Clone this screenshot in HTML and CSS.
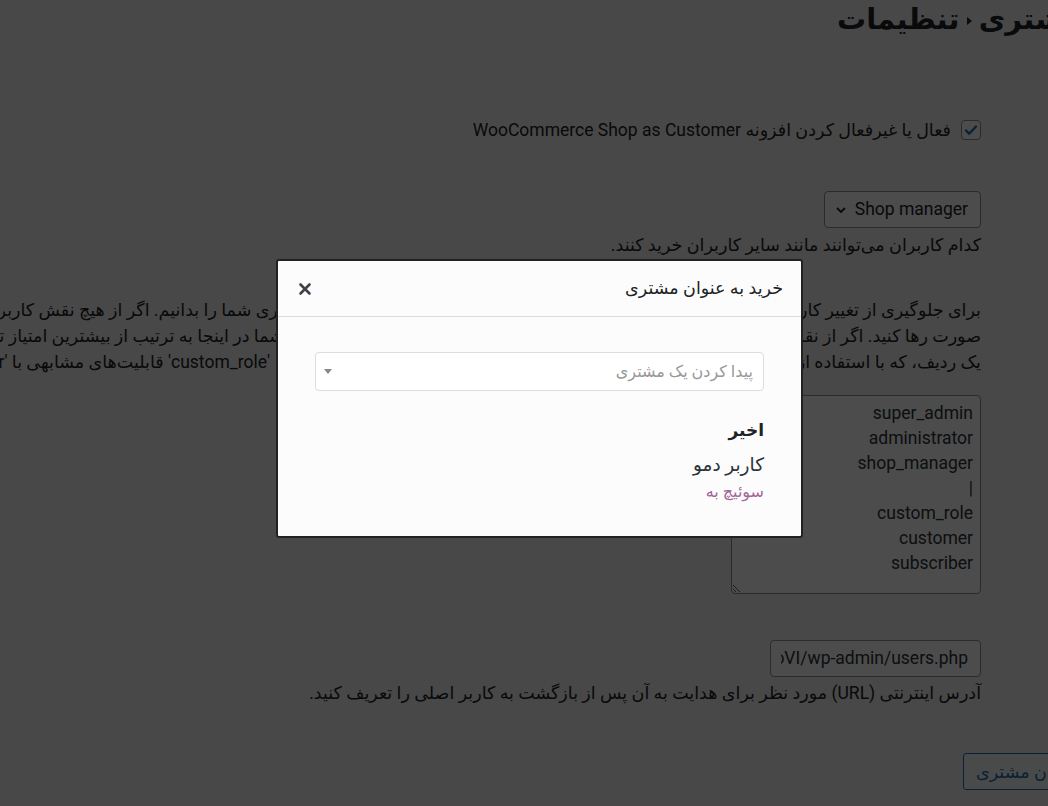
FILE: index.html
```html
<!doctype html>
<html lang="fa" dir="rtl">
  <head>
    <meta charset="UTF-8" />
    <meta name="viewport" content="width=device-width, initial-scale=1.0" />
    <title>تنظیمات خرید به عنوان مشتری</title>
    <link rel="stylesheet" href="styles.css">
  </head>
  <body>
    <div class="wrap">
      <h1 class="page-title"><span>خرید به عنوان مشتری <span class="crumb-sep"></span> تنظیمات</span></h1>

      <label class="toggle">
        <span class="checkbox">
          <svg width="16" height="16" viewBox="0 0 16 16"><path d="M3 8.5l3.2 3.2L13 4.5" fill="none" stroke="#2271b1" stroke-width="2.4" stroke-linecap="round" stroke-linejoin="round"/></svg>
        </span>
        فعال یا غیرفعال کردن افزونه WooCommerce Shop as Customer
      </label>

      <div class="field">
        <div class="select">
          <span>Shop manager</span>
          <svg width="12" height="8" viewBox="0 0 12 8"><path d="M2 2l4 4 4-4" fill="none" stroke="#1d2327" stroke-width="1.8"/></svg>
        </div>
      </div>
      <p class="desc">کدام کاربران می‌توانند مانند سایر کاربران خرید کنند.</p>

      <div class="roles-help">
        <div class="line">
          <span class="line-start">برای جلوگیری از تغییر کاربر به کاربری با قابلیت‌های بیشتر، ما نیاز داریم ترتیب نقش‌های</span>
          <span class="line-rest first">کاربری شما را بدانیم. اگر از هیچ نقش کاربری سفارشی استفاده نمی‌کنید، این فیلد را به همین</span>
        </div>
        <div class="line">
          <span class="line-start">صورت رها کنید. اگر از نقش‌های سفارشی استفاده می‌کنید، لطفاً همه نقش‌های</span>
          <span class="line-rest second">شما در اینجا به ترتیب از بیشترین امتیاز تا کمترین وارد کنید. هر نقش در</span>
        </div>
        <div class="line">
          <span class="line-start">یک ردیف، که با استفاده از یک خط عمودی جدا شده است. برای مثال نقش</span>
          <span class="line-rest third">'custom_role' قابلیت‌های مشابهی با 'shop_manager' دارد.</span>
        </div>
      </div>

      <textarea class="roles" rows="7" spellcheck="false">super_admin
administrator
shop_manager
|
custom_role
customer
subscriber</textarea>

      <div class="url-field"><span>https://demo.example.com/sandbox/kT3aoVI/wp-admin/users.php</span></div>
      <p class="desc">آدرس اینترنتی (URL) مورد نظر برای هدایت به آن پس از بازگشت به کاربر اصلی را تعریف کنید.</p>

      <div class="submit-row">
        <button class="button">خرید به عنوان مشتری</button>
      </div>
    </div>

    <div class="backdrop"></div>

    <div class="modal">
      <div class="modal-header">
        <h2>خرید به عنوان مشتری</h2>
        <button class="modal-close" aria-label="بستن">
          <svg width="14" height="14" viewBox="0 0 14 14"><path d="M2.5 2.5l9 9M11.5 2.5l-9 9" stroke="#3c434a" stroke-width="2.6" stroke-linecap="round"/></svg>
        </button>
      </div>
      <div class="modal-body">
        <div class="customer-search">
          <span class="placeholder">پیدا کردن یک مشتری</span>
          <span class="search-arrow"></span>
        </div>
        <h3 class="recent-title">اخیر</h3>
        <div class="customer-name">کاربر دمو</div>
        <a href="#" class="switch-link">سوئیچ به</a>
      </div>
    </div>
  </body>
</html>
```
FILE: styles.css
```css
html,
body {
  margin: 0;
}

body {
  width: 1048px;
  height: 806px;
  overflow: hidden;
  background-color: #f0f0f1;
  color: #1d2327;
  font-family: Roboto, "DejaVu Sans", sans-serif;
  font-size: 17.5px;
  line-height: 1.5;
}

.wrap {
  width: 981px;
  margin-right: 67px;
}

/* title is wider than the frame: pin its left end, let it run off the right */
.page-title {
  display: flex;
  justify-content: flex-end;
  margin: 0 -400px 0 0;
  padding-left: 837px;
  font-size: 29px;
  font-weight: 700;
  line-height: 38px;
  white-space: nowrap;
}

.page-title > span {
  flex: none;
}

.crumb-sep {
  display: inline-block;
  width: 0;
  height: 0;
  border-top: 4px solid transparent;
  border-bottom: 4px solid transparent;
  border-left: 5px solid #1d2327;
  vertical-align: middle;
}

.toggle {
  display: flex;
  align-items: center;
  gap: 10px;
  margin-top: 79px;
  line-height: 26px;
}

.checkbox {
  width: 18px;
  height: 18px;
  border: 1px solid #8c8f94;
  border-radius: 4px;
  background-color: #fff;
  display: grid;
  place-items: center;
}

.field {
  margin-top: 48px;
}

.select {
  display: inline-flex;
  align-items: center;
  gap: 8px;
  height: 37px;
  box-sizing: border-box;
  padding: 0 12px 0 10px;
  border: 1px solid #8c8f94;
  border-radius: 4px;
  background-color: #fff;
}

.desc {
  margin: 4px 0 0;
  line-height: 26px;
}

.roles-help {
  margin-top: 39px;
  line-height: 26px;
}

.line {
  display: flex;
  white-space: nowrap;
}

.line-start {
  flex: none;
  width: 705px;
  overflow: hidden;
}

.line-rest {
  flex: none;
}

.line-rest.first {
  margin-right: -30px;
}

.line-rest.second {
  margin-right: -8px;
}

.line-rest.third {
  margin-right: 6px;
}

.roles {
  display: block;
  width: 250px;
  height: 199px;
  box-sizing: border-box;
  margin-top: 20px;
  padding: 5px 7px 4px;
  border: 1px solid #8c8f94;
  border-radius: 4px;
  background-color: #fff;
  color: #2c3338;
  font-family: Roboto, "DejaVu Sans", sans-serif;
  font-size: 17.5px;
  line-height: 25px;
  resize: vertical;
}

.url-field {
  display: flex;
  align-items: center;
  width: 211px;
  height: 37px;
  box-sizing: border-box;
  margin-top: 46px;
  padding: 0 12px 0 10px;
  border: 1px solid #8c8f94;
  border-radius: 4px;
  background-color: #fff;
  color: #2c3338;
}

.url-field span {
  display: block;
  overflow: hidden;
  white-space: nowrap;
}

.url-field + .desc {
  margin-top: 3px;
}

.submit-row {
  display: flex;
  justify-content: flex-end;
  margin-top: 47px;
  margin-right: -300px;
  padding-left: 963px;
}

.button {
  height: 37px;
  padding: 0 12px;
  border: 1px solid #2271b1;
  border-radius: 3px;
  background-color: #f6f7f7;
  color: #2271b1;
  font-family: Roboto, "DejaVu Sans", sans-serif;
  font-size: 17.5px;
  white-space: nowrap;
}

.backdrop {
  position: fixed;
  inset: 0;
  background-color: rgba(0, 0, 0, 0.7);
}

.modal {
  position: fixed;
  top: 259px;
  left: 276px;
  width: 527px;
  box-sizing: border-box;
  border: 2px solid #222;
  border-radius: 3px;
  background-color: #fcfcfc;
}

.modal-header {
  display: flex;
  align-items: center;
  justify-content: space-between;
  height: 55px;
  padding: 0 18px 0 20px;
  border-bottom: 1px solid #ddd;
}

.modal-header h2 {
  margin: 0;
  font-size: 17.5px;
  font-weight: 400;
  color: #1d2327;
}

.modal-close {
  display: grid;
  place-items: center;
  padding: 0;
  border: none;
  background: none;
  cursor: pointer;
}

.modal-body {
  padding: 35px 37px 33px;
}

.customer-search {
  display: flex;
  align-items: center;
  justify-content: space-between;
  height: 39px;
  box-sizing: border-box;
  padding: 0 10px 0 8px;
  border: 1px solid #ddd;
  border-radius: 4px;
  background-color: #fff;
}

.placeholder {
  color: #999;
  font-size: 16px;
}

.search-arrow {
  width: 0;
  height: 0;
  border-top: 5px solid #888;
  border-left: 4px solid transparent;
  border-right: 4px solid transparent;
}

.recent-title {
  margin: 25px 0 0;
  font-size: 17px;
  font-weight: 700;
  line-height: 28px;
  color: #1d2327;
}

.customer-name {
  margin-top: 7px;
  font-size: 18.5px;
  line-height: 28px;
  color: #2c3338;
}

.switch-link {
  display: block;
  margin-top: 2px;
  font-size: 16px;
  line-height: 22px;
  color: #a46497;
  text-decoration: none;
}
```
